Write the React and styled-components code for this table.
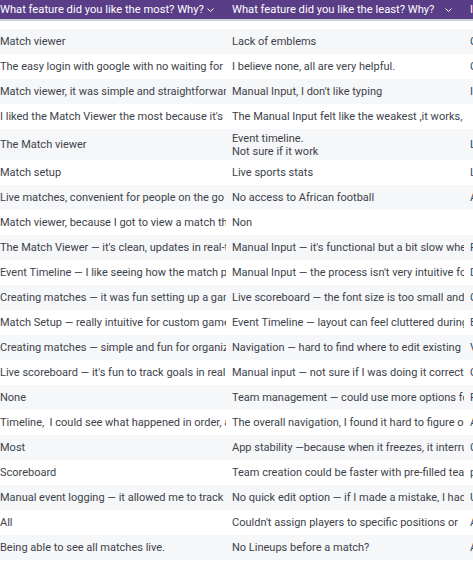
import React from 'react';
import styled, { createGlobalStyle } from 'styled-components';

const GlobalStyle = createGlobalStyle`
  html, body {
    margin: 0;
    padding: 0;
    background: #ffffff;
  }
  body {
    font-family: Roboto, "Liberation Sans", Arial, sans-serif;
  }
`;

const COLS = [232, 238, 240];

const Viewport = styled.div`
  width: 473px;
  height: 578px;
  overflow: hidden;
  background: #ffffff;
`;

const Table = styled.div`
  margin-left: -6px;
  width: ${COLS.reduce((a, b) => a + b, 0)}px;
`;

const HeaderRow = styled.div`
  display: flex;
  height: 19px;
  background: #5a3d87;
  box-shadow: 0 2px 0 #cfd0d6;
  margin-bottom: 10px;
`;

const HeaderCell = styled.div`
  flex: 0 0 ${(p) => p.$w}px;
  display: flex;
  align-items: center;
  box-sizing: border-box;
  padding: 0 12px 0 6px;
  color: #ffffff;
  font-size: 11.2px;
  white-space: nowrap;
  overflow: hidden;

  span {
    flex: none;
  }

  svg {
    flex: none;
    margin-left: auto;
    margin-top: 1px;
  }
`;

const Row = styled.div`
  display: flex;
  align-items: center;
  min-height: ${(p) => (p.$tall ? 31 : 25)}px;
  background: ${(p) => (p.$striped ? '#f6f7f9' : '#ffffff')};
`;

const Cell = styled.div`
  flex: 0 0 ${(p) => p.$w}px;
  box-sizing: border-box;
  padding: 1px 0 0 6px;
  color: #3d424a;
  font-size: 11px;
  line-height: 13.5px;
  white-space: pre;
  overflow: hidden;
`;

const Chevron = () => (
  <svg width="7" height="4" viewBox="0 0 7 4">
    <polyline points="0.5,0.6 3.5,3.4 6.5,0.6" fill="none" stroke="#ffffff" strokeWidth="1" />
  </svg>
);

const headers = [
  'What feature did you like the most? Why?',
  'What feature did you like the least? Why?',
  'Is there anything you would change?',
];

const rows = [
  ['Match viewer', 'Lack of emblems', 'Could add more'],
  ['The easy login with google with no waiting for codes', 'I believe none, all are very helpful.', 'Conversion'],
  ['Match viewer, it was simple and straightforward', "Manual Input, I don't like typing", 'I would'],
  ["I liked the Match Viewer the most because it's clear", 'The Manual Input felt like the weakest ,it works, m', ''],
  ['The Match viewer', 'Event timeline.\nNot sure if it work', 'Layout'],
  ['Match setup', 'Live sports stats', 'Live'],
  ['Live matches, convenient for people on the go', 'No access to African football', 'African'],
  ['Match viewer, because I got to view a match that', 'Non', ''],
  ["The Match Viewer — it's clean, updates in real-time", "Manual Input — it's functional but a bit slow when", 'Faster'],
  ['Event Timeline — I like seeing how the match played', "Manual Input — the process isn't very intuitive for", 'Dark mode'],
  ['Creating matches — it was fun setting up a game', 'Live scoreboard — the font size is too small and', 'Colours'],
  ['Match Setup — really intuitive for custom games', 'Event Timeline — layout can feel cluttered during', 'Events'],
  ['Creating matches — simple and fun for organizing', 'Navigation — hard to find where to edit existing', 'View'],
  ["Live scoreboard — it's fun to track goals in real time", 'Manual input — not sure if I was doing it correctly', 'Clearer'],
  ['None', 'Team management — could use more options for', 'Fixtures'],
  ['Timeline,  I could see what happened in order, and', 'The overall navigation, I found it hard to figure out', 'Add'],
  ['Most', 'App stability —because when it freezes, it interrupts', 'Crash'],
  ['Scoreboard', 'Team creation could be faster with pre-filled teams', 'players'],
  ['Manual event logging — it allowed me to track', 'No quick edit option — if I made a mistake, I had to', 'Undo'],
  ['All', "Couldn't assign players to specific positions or", 'Add'],
  ['Being able to see all matches live.', 'No Lineups before a match?', 'Add'],
];

export default function App() {
  return (
    <Viewport>
      <GlobalStyle />
      <Table>
        <HeaderRow>
          {headers.map((h, i) => (
            <HeaderCell key={h} $w={COLS[i]}>
              <span>{h}</span>
              <Chevron />
            </HeaderCell>
          ))}
        </HeaderRow>
        {rows.map((r, i) => (
          <Row key={i} $striped={i % 2 === 0} $tall={r[1].includes('\n')}>
            {r.map((c, j) => (
              <Cell key={j} $w={COLS[j]}>
                {c}
              </Cell>
            ))}
          </Row>
        ))}
      </Table>
    </Viewport>
  );
}
